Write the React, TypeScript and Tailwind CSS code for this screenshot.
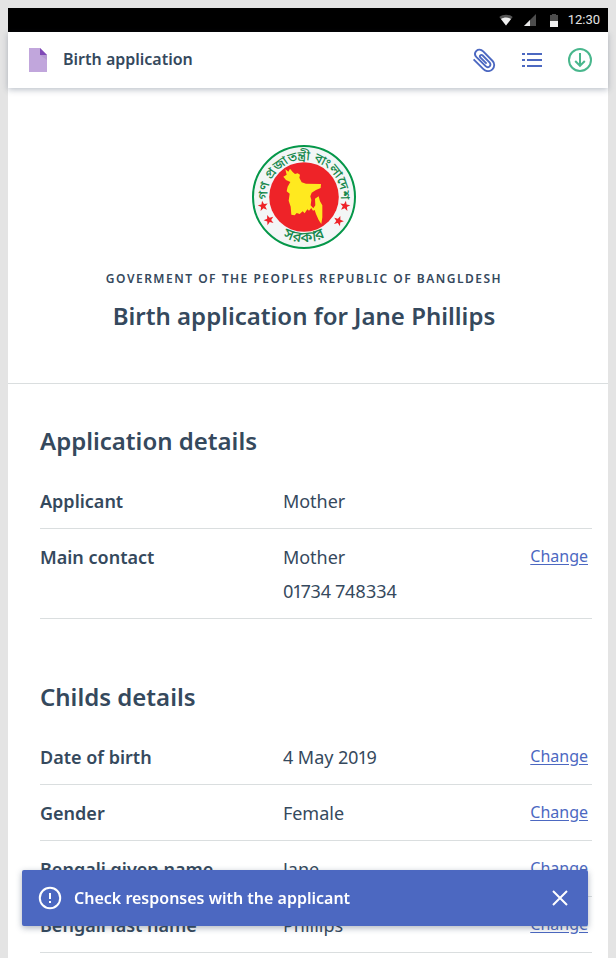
import { useState } from "react";

type Row = { label: string; values: string[]; editable?: boolean };

const applicationRows: Row[] = [
  { label: "Applicant", values: ["Mother"] },
  { label: "Main contact", values: ["Mother", "01734 748334"], editable: true },
];

const childRows: Row[] = [
  { label: "Date of birth", values: ["4 May 2019"], editable: true },
  { label: "Gender", values: ["Female"], editable: true },
  { label: "Bengali given name", values: ["Jane"], editable: true },
  { label: "Bengali last name", values: ["Phillips"], editable: true },
];

function StatusBar() {
  return (
    <div className="flex h-6 items-center justify-end bg-black pr-2 text-[#e4e4e4]">
      <svg width="14" height="12" viewBox="0 0 14 12" className="mr-[11px]" aria-hidden="true">
        <path d="M0.3 3 C4 -0.1 10 -0.1 13.7 3 L7 11.6 Z" fill="#555" />
        <path d="M2 5 C5 3 9 3 12 5 L7 11.6 Z" fill="#f0f0f0" />
      </svg>
      <svg width="12" height="12" viewBox="0 0 12 12" className="mr-3.5" aria-hidden="true">
        <path d="M12 0 V12 H0 Z" fill="#4d4d4d" />
        <path d="M6 6 V12 H0 Z" fill="#e8e8e8" />
      </svg>
      <svg width="8" height="13" viewBox="0 0 8 13" className="mr-2.5" aria-hidden="true">
        <path d="M2 0 H6 V1 H8 V7 H0 V1 H2 Z" fill="#4d4d4d" />
        <path d="M0 7 H8 V13 H0 Z" fill="#f0f0f0" />
      </svg>
      <span className="font-[Roboto,sans-serif] text-[13px] leading-6">12:30</span>
    </div>
  );
}

function Header() {
  return (
    <header className="relative flex h-14 items-center bg-white pr-4 pl-5 shadow-[0_2px_6px_rgba(53,67,93,0.32)]">
      <svg width="20" height="24" viewBox="0 0 20 24" aria-hidden="true">
        <path d="M1 0 H12 L19 7 V24 H1 Z" fill="#c1a6dc" />
        <path d="M12 7 H19 V12 Z" fill="#a98cc9" opacity="0.5" />
        <path d="M12 0 L19 7 H12 Z" fill="#8049b7" />
      </svg>
      <h1 className="ml-[15px] flex-1 pb-0.5 text-base leading-6 font-semibold">Birth application</h1>
      <div className="flex items-center gap-6">
        <button type="button" aria-label="Attachments" className="size-6 text-[#4c68c1]">
          <svg width="24" height="24" viewBox="0 0 24 24" fill="none" stroke="currentColor" strokeWidth="1.9">
            <path d="M1.6 11.4 L11.4 21.2 C14.2 24 18.2 23.5 20.4 21.3 C22.8 18.9 22.8 15.2 20.6 13 L11.2 3.4 C8.9 1.1 6 1.3 4.4 2.9 C2.7 4.6 2.7 7.2 4.5 9.1 L13.6 18.2 C14.9 19.5 16.6 19.3 17.6 18.3 C18.7 17.2 18.7 15.5 17.5 14.3 L10.7 7.5 C9.9 6.7 8.9 6.8 8.3 7.4 C7.7 8 7.8 8.9 8.5 9.6 L14.6 15.7" />
          </svg>
        </button>
        <button type="button" aria-label="Sections" className="size-6 text-[#4c68c1]">
          <svg width="24" height="24" viewBox="0 0 24 24" fill="none" stroke="currentColor" strokeWidth="2">
            <path d="M2 6 H5 M2 12 H5 M2 18 H5 M7 6 H22 M7 12 H22 M7 18 H22" />
          </svg>
        </button>
        <button type="button" aria-label="Download" className="size-6 text-[#49b78d]">
          <svg width="24" height="24" viewBox="0 0 24 24" fill="none" stroke="currentColor" strokeWidth="2">
            <circle cx="12" cy="12" r="11" />
            <path d="M12 5 V18 M7.2 13 L12 17.8 L16.8 13" />
          </svg>
        </button>
      </div>
    </header>
  );
}

const STAR = "M0 -5.4 L1.3 -1.8 L5.1 -1.7 L2.1 0.7 L3.2 4.4 L0 2.2 L-3.2 4.4 L-2.1 0.7 L-5.1 -1.7 L-1.3 -1.8 Z";

function Emblem() {
  return (
    <svg
      width="104"
      height="104"
      viewBox="0 0 104 104"
      role="img"
      aria-label="Government seal of Bangladesh"
      className="font-['Noto_Sans_Bengali','Noto_Sans',sans-serif]"
    >
      <defs>
        <path id="seal-top" d="M17 63 A36.7 36.7 0 1 1 87 63" />
        <path id="seal-bottom" d="M15 78 A45.2 45.2 0 0 0 89 78" />
      </defs>
      <circle cx="52" cy="52" r="51" fill="#f3f6f6" stroke="#059749" strokeWidth="2" />
      <circle cx="52" cy="52" r="34.8" fill="#ee2328" />
      <path
        transform="translate(24 15) scale(0.3333)"
        d="M28 28 L37 35 L42 26 L50 36 L57 42 L65 40 L72 44 L70 53 L77 67 L90 71 L135 72 L134 84 L120 90 L107 98 L103 109 L106 120 L104 136 L112 145 L118 136 L117 116 L128 109 L132 124 L139 136 L139 172 L136 192 L128 180 L120 162 L116 150 L111 152 L106 144 L99 152 L94 148 L86 160 L80 154 L71 162 L62 159 L56 166 L46 164 L44 140 L38 122 L41 101 L32 94 L35 80 L43 66 L30 60 L22 50 L32 44 Z"
        fill="#ffe91f"
      />
      <g fill="#ee2328">
        <path d={STAR} transform="translate(11 61) rotate(-10)" />
        <path d={STAR} transform="translate(17 75) rotate(-20)" />
        <path d={STAR} transform="translate(93 61) rotate(10)" />
        <path d={STAR} transform="translate(86.5 76) rotate(20)" />
      </g>
      <g fill="#17884d" fontWeight="500" textAnchor="middle">
        <text fontSize="13">
          <textPath href="#seal-top" startOffset="50%">
            গণ প্রজাতন্ত্রী বাংলাদেশ
          </textPath>
        </text>
        <text fontSize="15">
          <textPath href="#seal-bottom" startOffset="50%">
            সরকার
          </textPath>
        </text>
      </g>
    </svg>
  );
}

function DetailRow({ label, values, editable }: Row) {
  return (
    <div className="flex items-start border-b border-[#dadedf] pt-[11px] pb-2.5 text-lg leading-[34px]">
      <dt className="w-[44%] shrink-0 font-semibold">{label}</dt>
      <dd className="flex-1 proportional-nums">
        {values.map((value) => (
          <p key={value}>{value}</p>
        ))}
      </dd>
      {editable && (
        <dd className="pr-1 text-base leading-8">
          <a href="#change" aria-label={`Change ${label}`} className="text-[#4c68c1] underline underline-offset-2">
            Change
          </a>
        </dd>
      )}
    </div>
  );
}

function Section({ title, rows }: { title: string; rows: Row[] }) {
  return (
    <section>
      <h3 className="mb-4 text-2xl leading-8 font-semibold">{title}</h3>
      <dl>
        {rows.map((row) => (
          <DetailRow key={row.label} {...row} />
        ))}
      </dl>
    </section>
  );
}

function Toast({ onClose }: { onClose: () => void }) {
  return (
    <div
      role="status"
      className="fixed right-7 bottom-8 left-[22px] flex h-14 items-center rounded-xs bg-[#4c68c1] px-4 text-white shadow-[0_2px_6px_rgba(53,67,93,0.4)]"
    >
      <svg width="24" height="24" viewBox="0 0 24 24" fill="none" stroke="currentColor" strokeWidth="2" aria-hidden="true">
        <circle cx="12" cy="12" r="10.2" />
        <path d="M12 7 V13 M12 15 V17" />
      </svg>
      <p className="ml-3 flex-1 text-base leading-6 font-semibold">Check responses with the applicant</p>
      <button type="button" aria-label="Dismiss" onClick={onClose} className="size-6">
        <svg width="24" height="24" viewBox="0 0 24 24" fill="none" stroke="currentColor" strokeWidth="2">
          <path d="M5 5 L19 19 M19 5 L5 19" />
        </svg>
      </button>
    </div>
  );
}

export default function App() {
  const [toastOpen, setToastOpen] = useState(true);
  return (
    <div className="flex min-h-screen flex-col bg-[#e4e4e4] px-2 pt-2 font-['Noto_Sans',sans-serif] text-[#35495d]">
      <StatusBar />
      <Header />
      <main className="flex-1 bg-white">
        <div className="flex flex-col items-center border-b border-[#dadedf] pt-[57px] pr-8 pb-[51px] pl-6 text-center">
          <Emblem />
          <p className="mt-5 text-xs leading-5 font-semibold tracking-[1.5px] uppercase">
            Goverment of the peoples republic of Bangldesh
          </p>
          <h2 className="mt-[11px] text-2xl leading-8 font-semibold">Birth application for Jane Phillips</h2>
        </div>
        <div className="flex flex-col gap-[62px] px-4 pt-[41px] pl-8">
          <Section title="Application details" rows={applicationRows} />
          <Section title="Childs details" rows={childRows} />
        </div>
      </main>
      {toastOpen && <Toast onClose={() => setToastOpen(false)} />}
    </div>
  );
}
